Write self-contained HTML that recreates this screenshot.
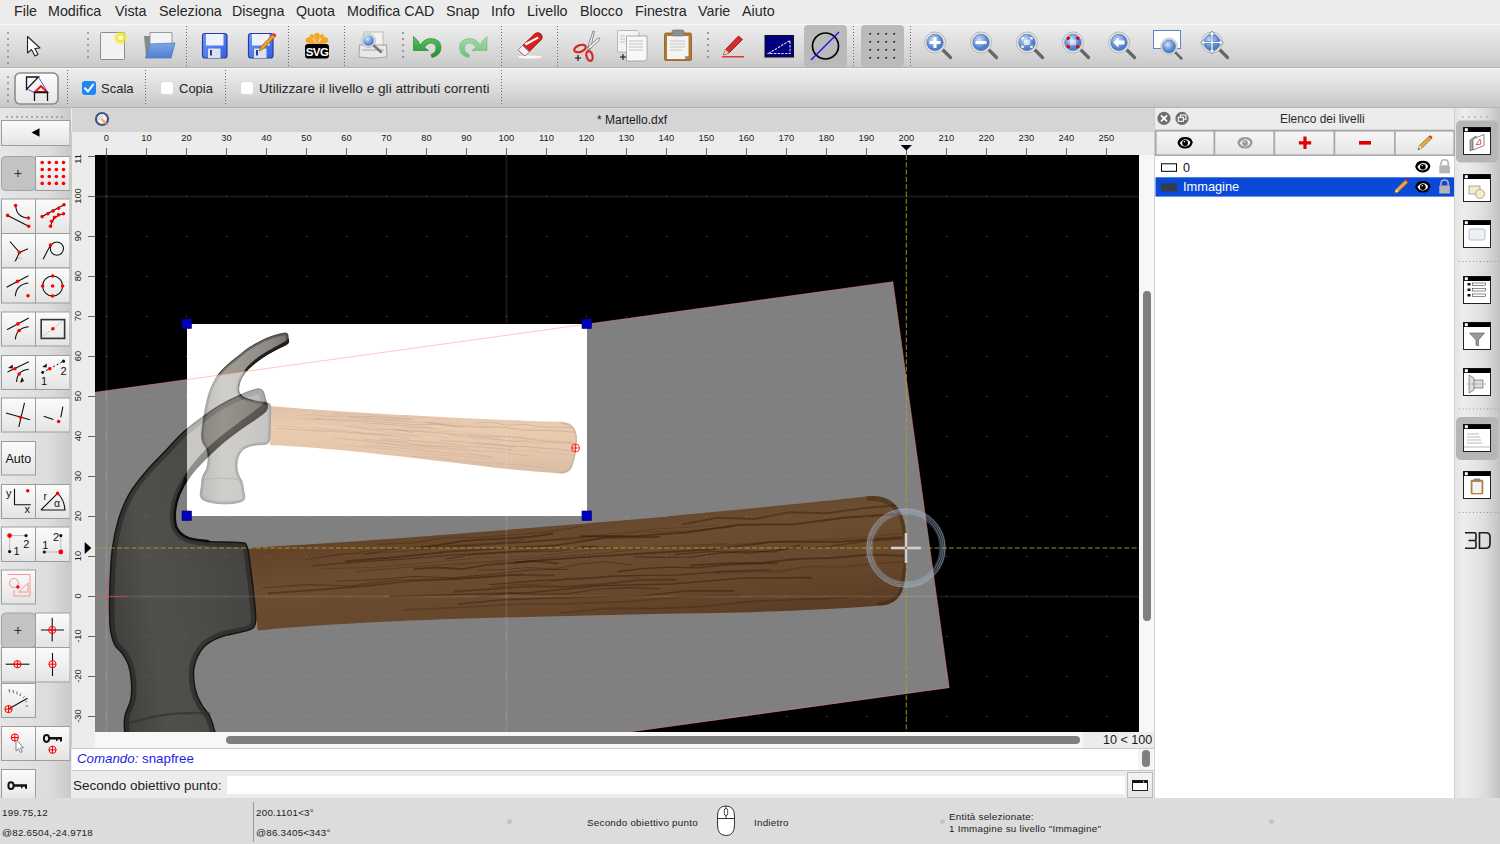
<!DOCTYPE html>
<html><head><meta charset="utf-8">
<style>
*{margin:0;padding:0;box-sizing:border-box}
html,body{width:1500px;height:844px;overflow:hidden;background:#ececec;font-family:"Liberation Sans",sans-serif;color:#222}
.a{position:absolute}
.t{position:absolute;white-space:nowrap;line-height:1}
#menu{left:0;top:0;width:1500px;height:24px;background:#ececec}
#menu .t{top:4px;font-size:14.3px;color:#262626}
#tb1{left:0;top:24px;width:1500px;height:44px;background:linear-gradient(#ededed,#e5e5e5 25%,#d6d6d6 70%,#c9c9c9);border-top:1px solid #f8f8f8;border-bottom:1px solid #b2b2b2}
#tb2{left:0;top:68px;width:1500px;height:40px;background:linear-gradient(#ededed,#e2e2e2 35%,#d2d2d2 75%,#c6c6c6);border-top:1px solid #f6f6f6;border-bottom:1px solid #b2b2b2}
.vsep{position:absolute;width:0;border-left:2px dotted #8a8a8a}
.hsep{position:absolute;height:0;border-top:2px dotted #8a8a8a}
#ltb{left:0;top:108px;width:71px;height:690px;background:linear-gradient(90deg,#e6e6e6,#dcdcdc 70%,#c9c9c9)}
.btn{position:absolute;width:35px;height:35px;border:1px solid #9c9c9c;background:linear-gradient(#fafafa,#ececec 60%,#e2e2e2)}
.btn.on{background:linear-gradient(#c9c9c9,#bdbdbd);border-color:#a5a5a5;border-radius:4px}
.btn svg{position:absolute;left:0;top:0}
#status{left:0;top:798px;width:1500px;height:46px;background:#dcdcdc}
#status .t{font-size:9.8px;letter-spacing:.25px;color:#222;margin-top:1px}
</style></head><body>

<!-- MENU -->
<div id="menu" class="a">
<span class="t" style="left:14px">File</span>
<span class="t" style="left:48px">Modifica</span>
<span class="t" style="left:115px">Vista</span>
<span class="t" style="left:159px">Seleziona</span>
<span class="t" style="left:232px">Disegna</span>
<span class="t" style="left:296px">Quota</span>
<span class="t" style="left:347px">Modifica CAD</span>
<span class="t" style="left:446px">Snap</span>
<span class="t" style="left:491px">Info</span>
<span class="t" style="left:527px">Livello</span>
<span class="t" style="left:580px">Blocco</span>
<span class="t" style="left:635px">Finestra</span>
<span class="t" style="left:698px">Varie</span>
<span class="t" style="left:742px">Aiuto</span>
</div>

<!-- TOOLBAR 1 -->
<div id="tb1" class="a"></div>
<svg class="a" style="left:0;top:24px" width="1500" height="44" viewBox="0 24 1500 44">
<defs>
<linearGradient id="gBlue" x1="0" y1="0" x2="0" y2="1"><stop offset="0" stop-color="#7aa7e8"/><stop offset="1" stop-color="#4d7fcc"/></linearGradient>
<linearGradient id="gFlop" x1="0" y1="0" x2="1" y2="1"><stop offset="0" stop-color="#6f9cf5"/><stop offset="1" stop-color="#2f5fe0"/></linearGradient>
<radialGradient id="gGlow"><stop offset="0" stop-color="#fffbb0"/><stop offset=".45" stop-color="#f0e830"/><stop offset="1" stop-color="#f0e830" stop-opacity="0"/></radialGradient>
<radialGradient id="gMag" cx=".4" cy=".35"><stop offset="0" stop-color="#d6e6fb"/><stop offset=".6" stop-color="#7fa8e0"/><stop offset="1" stop-color="#4f7fc8"/></radialGradient>
<linearGradient id="gGreen" x1="0" y1="0" x2="0" y2="1"><stop offset="0" stop-color="#5cc65c"/><stop offset="1" stop-color="#1f8f2f"/></linearGradient>
<linearGradient id="gGreenL" x1="0" y1="0" x2="0" y2="1"><stop offset="0" stop-color="#a8dca8"/><stop offset="1" stop-color="#6cbf7c"/></linearGradient>
</defs>
<g fill="#8a8a8a">
<circle cx="8" cy="33" r="1"/><circle cx="8" cy="39" r="1"/><circle cx="8" cy="45" r="1"/><circle cx="8" cy="51" r="1"/><circle cx="8" cy="57" r="1"/><circle cx="8" cy="63" r="1"/>
<circle cx="88" cy="33" r="1"/><circle cx="88" cy="39" r="1"/><circle cx="88" cy="45" r="1"/><circle cx="88" cy="51" r="1"/><circle cx="88" cy="57" r="1"/>
<circle cx="403" cy="33" r="1.1"/><circle cx="403" cy="39" r="1.1"/><circle cx="403" cy="45" r="1.1"/><circle cx="403" cy="51" r="1.1"/><circle cx="403" cy="57" r="1.1"/>
<circle cx="708" cy="33" r="1.1"/><circle cx="708" cy="39" r="1.1"/><circle cx="708" cy="45" r="1.1"/><circle cx="708" cy="51" r="1.1"/><circle cx="708" cy="57" r="1.1"/>
</g>
<g stroke="#6a6a6a" stroke-width="1" stroke-dasharray="1 2">
<line x1="186.5" y1="26" x2="186.5" y2="67"/><line x1="288.5" y1="26" x2="288.5" y2="67"/><line x1="344.5" y1="26" x2="344.5" y2="67"/>
<line x1="501.5" y1="26" x2="501.5" y2="67"/><line x1="557.5" y1="26" x2="557.5" y2="67"/><line x1="853.5" y1="26" x2="853.5" y2="67"/><line x1="910.5" y1="26" x2="910.5" y2="67"/>
</g>
<!-- arrow -->
<path d="M27.5 36.5 L27.5 53 L31.5 49.5 L35 56 L38 54.5 L34.8 48.5 L40 48 Z" fill="#fff" stroke="#222" stroke-width="1.1" stroke-linejoin="round"/>
<!-- new -->
<rect x="100.5" y="32.5" width="24" height="27" rx="1" fill="#f2f2f2" stroke="#8c8c8c"/>
<circle cx="120.7" cy="37.7" r="7.5" fill="url(#gGlow)"/><circle cx="120.7" cy="37.7" r="2.2" fill="#fffde0"/>
<!-- open -->
<path d="M144 36 L151 36 L151 57 L146 57 Z" fill="#8a8a8a"/>
<path d="M150 32.5 L172 32.5 L172 48 L150 48 Z" fill="#f4f4f4" stroke="#9a9a9a"/>
<path d="M150 44 L175 43 L171 58 L145.5 58 Z" fill="url(#gBlue)" stroke="#5579b5" stroke-width=".8"/>
<!-- save -->
<g id="flop"><rect x="202.5" y="33.5" width="24.5" height="24.5" rx="2.5" fill="url(#gFlop)" stroke="#2a3aa8" stroke-width="1.2"/>
<rect x="206" y="34" width="17.5" height="11.5" fill="#eef2fb"/>
<rect x="208" y="48.5" width="12.5" height="9.5" fill="#dde2ea"/><rect x="210" y="50" width="2" height="5.5" fill="#2238b8"/></g>
<use href="#flop" x="46"/>
<path d="M259 51 L261 46.5 L273.5 33.5 L276 35.5 L263.5 48.8 Z" fill="#f0a020" stroke="#b05010" stroke-width=".7"/>
<path d="M272 34.8 L273.8 33 L276.5 35.2 L274.8 37 Z" fill="#e03030"/>
<!-- svg -->
<g fill="#f5a623">
<path d="M317 45 L314 38 Q317 33 320 38 Z"/><path d="M317 45 L307 43 Q306 38 311 37 Z"/><path d="M317 45 L327 43 Q328 38 323 37 Z"/>
<circle cx="308.5" cy="40" r="2.8"/><circle cx="325.5" cy="40" r="2.8"/><circle cx="317" cy="35.5" r="2.8"/><circle cx="312" cy="36.5" r="2.3"/><circle cx="322" cy="36.5" r="2.3"/>
</g>
<rect x="305" y="44" width="24" height="14.5" rx="3" fill="#000"/>
<text x="317" y="56.3" font-family="Liberation Sans" font-weight="bold" font-size="11.5" fill="#fff" text-anchor="middle" letter-spacing="-.6">SVG</text>
<!-- print preview -->
<rect x="364" y="32" width="19" height="14" fill="#f2f2f2" stroke="#b0b0b0" stroke-width=".8"/>
<path d="M359.5 45 L386.5 45 L387 57 Q373 59.5 359 57 Z" fill="#e8e8e8" stroke="#9b9b9b" stroke-width=".9"/>
<rect x="362" y="49" width="22" height="2" fill="#c8c8c8"/>
<line x1="372" y1="44" x2="381" y2="52" stroke="#777" stroke-width="2.4" stroke-linecap="round"/>
<circle cx="368.5" cy="40.5" r="6" fill="url(#gMag)" stroke="#e8e8e8" stroke-width="1.4"/>
<circle cx="368.5" cy="40.5" r="6.9" fill="none" stroke="#9a9a9a" stroke-width=".6"/>
<!-- undo -->
<path d="M420 45.5 Q424 38.5 431 38.5 Q440.5 39 441 47 Q441 55.5 432 57.5 L431 54.5 Q436.5 52.5 436 47 Q435.5 43 431 43 Q427 43 424.5 47.5 L428.5 50.5 L413.5 50.5 L413.5 36.5 L418.5 41.5 Z" fill="url(#gGreen)" stroke="#1d7a2a" stroke-width=".6"/>
<!-- redo -->
<path d="M480.5 45.5 Q476.5 38.5 469.5 38.5 Q460 39 459.5 47 Q459.5 55.5 468.5 57.5 L469.5 54.5 Q464 52.5 464.5 47 Q465 43 469.5 43 Q473.5 43 476 47.5 L472 50.5 L487 50.5 L487 36.5 L482 41.5 Z" fill="url(#gGreenL)" stroke="#6cb87a" stroke-width=".6"/>
<!-- eraser -->
<ellipse cx="530" cy="57" rx="12" ry="1.6" fill="#fff" opacity=".85"/>
<path d="M518 50 L535 33.5 Q538 31.5 541 34 Q543.5 37 541.5 39.5 L525 56 Z" fill="#d42020" stroke="#8a1010" stroke-width=".7"/>
<path d="M524.5 43.5 L537.5 36.8 L538.8 38.3 L526 45.5 Z" fill="#fff"/>
<path d="M518 50 L522.5 45.5 L529.5 52 L525 56 Z" fill="#f4f4f4" stroke="#777" stroke-width=".6"/>
<!-- scissors -->
<path d="M587 49 L593 31 L594.5 31.5 L590 50 Z" fill="#eee" stroke="#777" stroke-width=".8"/>
<path d="M588 47 L599 37.5 L600 39.5 L590 49 Z" fill="#eee" stroke="#777" stroke-width=".8"/>
<ellipse cx="580" cy="48.5" rx="6" ry="3.3" fill="none" stroke="#d42828" stroke-width="2.2" transform="rotate(-20 580 48.5)"/>
<ellipse cx="589.5" cy="56" rx="3" ry="5" fill="none" stroke="#d42828" stroke-width="2.2" transform="rotate(-15 589.5 56)"/>
<path d="M575 58 H581 M578 55 V61" stroke="#111" stroke-width="1.1"/>
<!-- copy -->
<path d="M617.5 30.5 H637 L639 32.5 V52 H617.5 Z" fill="#f4f4f4" stroke="#aaa" stroke-width=".8"/>
<path d="M626.5 36 H647 V59 L645 61 H626.5 Z" fill="#f8f8f8" stroke="#999" stroke-width=".8"/>
<g stroke="#bbb" stroke-width=".9"><line x1="629" y1="41" x2="643" y2="41"/><line x1="629" y1="44" x2="643" y2="44"/><line x1="629" y1="47" x2="643" y2="47"/><line x1="629" y1="50" x2="643" y2="50"/><line x1="620" y1="36" x2="625" y2="36"/><line x1="620" y1="39" x2="625" y2="39"/><line x1="620" y1="42" x2="625" y2="42"/></g>
<path d="M620 57 H626 M623 54 V60" stroke="#111" stroke-width="1.1"/>
<!-- paste -->
<rect x="664.5" y="33" width="27" height="27.5" rx="1.5" fill="#b07a30" stroke="#8a5a20" stroke-width=".8"/>
<path d="M667 36 H688.5 V56 L685 59 H667 Z" fill="#f3f3f3"/>
<path d="M685 59 L688.5 56 H685 Z" fill="#999"/>
<rect x="672" y="30" width="12" height="6" rx="1.5" fill="#8f8f8f" stroke="#6b6b6b" stroke-width=".6"/>
<g stroke="#c4c4c4" stroke-width=".9"><line x1="670" y1="41" x2="685" y2="41"/><line x1="670" y1="44" x2="685" y2="44"/><line x1="670" y1="47" x2="685" y2="47"/><line x1="670" y1="50" x2="682" y2="50"/></g>
<!-- red pencil -->
<path d="M723.5 55 L725.5 49.5 L738.5 36 L742.5 39.5 L729 53 Z" fill="#d82a2a" stroke="#801010" stroke-width=".8"/>
<path d="M723.5 55 L725.5 49.5 L729 53 Z" fill="#f0d0a0"/>
<line x1="722" y1="56.8" x2="744" y2="56.8" stroke="#e01010" stroke-width="1.2"/>
<!-- blue rect -->
<rect x="765" y="35.5" width="28.5" height="21.5" fill="#000080" stroke="#111" stroke-width="1"/>
<path d="M768.5 53.5 L790 40.5 V53.5 Z" fill="none" stroke="#dde" stroke-width="1.1" stroke-dasharray="2.5 1.2"/>
<!-- selected circle -->
<rect x="804" y="25" width="43" height="42" rx="4" fill="#bababa"/>
<circle cx="825.5" cy="46" r="13" fill="none" stroke="#000" stroke-width="1.7"/>
<line x1="811" y1="60" x2="839" y2="32" stroke="#1010f0" stroke-width="1.2"/>
<!-- selected grid -->
<rect x="861" y="25" width="43" height="42" rx="4" fill="#bababa"/>
<g fill="#111">
<rect x="869.5" y="33" width="1.6" height="1.6"/><rect x="877.5" y="33" width="1.6" height="1.6"/><rect x="885.5" y="33" width="1.6" height="1.6"/><rect x="893.5" y="33" width="1.6" height="1.6"/>
<rect x="869.5" y="41" width="1.6" height="1.6"/><rect x="877.5" y="41" width="1.6" height="1.6"/><rect x="885.5" y="41" width="1.6" height="1.6"/><rect x="893.5" y="41" width="1.6" height="1.6"/>
<rect x="869.5" y="49" width="1.6" height="1.6"/><rect x="877.5" y="49" width="1.6" height="1.6"/><rect x="885.5" y="49" width="1.6" height="1.6"/><rect x="893.5" y="49" width="1.6" height="1.6"/>
<rect x="869.5" y="57" width="1.6" height="1.6"/><rect x="877.5" y="57" width="1.6" height="1.6"/><rect x="885.5" y="57" width="1.6" height="1.6"/><rect x="893.5" y="57" width="1.6" height="1.6"/>
</g>
<!-- zoom icons -->
<g id="zm"><line x1="941" y1="48" x2="950.5" y2="57.5" stroke="#666" stroke-width="3.2" stroke-linecap="round"/>
<circle cx="935" cy="42.5" r="10.5" fill="#e8e8e4" stroke="#aaa" stroke-width=".8"/>
<circle cx="935" cy="42.5" r="8.3" fill="url(#gMag)" stroke="#4c74b8" stroke-width=".6"/></g>
<path d="M935 37 V48 M929.5 42.5 H940.5" stroke="#fff" stroke-width="3"/>
<use href="#zm" x="46"/>
<path d="M975.5 42.5 H986.5" stroke="#fff" stroke-width="3"/>
<use href="#zm" x="92"/>
<path d="M1022 39.5 V38 H1024 M1030 38 H1032 V39.5 M1032 45.5 V47 H1030 M1024 47 H1022 V45.5" stroke="#fff" stroke-width="1.5" fill="none"/><rect x="1024" y="40" width="6" height="5" fill="#fff" opacity=".6"/>
<use href="#zm" x="138"/>
<path d="M1068 40 V38 H1070 M1076 38 H1078 V40 M1078 45 V47 H1076 M1070 47 H1068 V45" stroke="#e00" stroke-width="2.2" fill="none"/><rect x="1070" y="40" width="6" height="5" fill="#fff" opacity=".5"/>
<use href="#zm" x="184"/>
<path d="M1113.5 42.5 L1118.5 37.5 V40.5 H1124.5 V44.5 H1118.5 V47.5 Z" fill="#fff"/>
<rect x="1153.5" y="30.5" width="27" height="18" fill="#fff" stroke="#5a86c8" stroke-width="1"/>
<g transform="translate(1169 46.5) scale(.8) translate(-935 -42.5)"><use href="#zm"/></g>
<use href="#zm" x="277"/>
<path d="M1212 31 L1215 35 H1213 V41.5 H1219.5 V39.5 L1223.5 42.5 L1219.5 45.5 V43.5 H1213 V50 H1215 L1212 54 L1209 50 H1211 V43.5 H1204.5 V45.5 L1200.5 42.5 L1204.5 39.5 V41.5 H1211 V35 H1209 Z" fill="#fff" stroke="#4c74b8" stroke-width=".7"/>
</svg>

<!-- TOOLBAR 2 -->
<div id="tb2" class="a"></div>
<svg class="a" style="left:0;top:68px" width="520" height="40" viewBox="0 68 520 40">
<g fill="#8a8a8a"><circle cx="8" cy="77" r="1"/><circle cx="8" cy="83" r="1"/><circle cx="8" cy="89" r="1"/><circle cx="8" cy="95" r="1"/><circle cx="8" cy="101" r="1"/></g>
<g stroke="#6a6a6a" stroke-width="1" stroke-dasharray="1 2">
<line x1="67.5" y1="70" x2="67.5" y2="106"/><line x1="145.5" y1="70" x2="145.5" y2="106"/><line x1="225.5" y1="70" x2="225.5" y2="106"/><line x1="501.5" y1="70" x2="501.5" y2="106"/>
</g>
<rect x="15" y="73" width="43" height="31" rx="5" fill="url(#gBtn)" stroke="#8a8a8a" stroke-width="1.6"/>
<defs><linearGradient id="gBtn" x1="0" y1="0" x2="0" y2="1"><stop offset="0" stop-color="#fdfdfd"/><stop offset="1" stop-color="#e6e6e6"/></linearGradient></defs>
<path d="M26.5 89.5 V77 H38.5 Z" fill="none" stroke="#111" stroke-width="1.3"/>
<path d="M26.5 89 L34.5 92.5 M38.5 77 L47.5 92" stroke="#3030f0" stroke-width=".8"/>
<path d="M35 92 L41 86 L47 92 Z" fill="none" stroke="#e01010" stroke-width="1.8"/>
<path d="M34.5 101 V92.5 H47.5 V101" fill="none" stroke="#111" stroke-width="1.3"/>
<rect x="82" y="81" width="14" height="14" rx="3" fill="#1e85fa"/>
<path d="M85 88.3 L88 91.5 L93.2 84.5" fill="none" stroke="#fff" stroke-width="2" stroke-linecap="round" stroke-linejoin="round"/>
<rect x="160.5" y="81.5" width="13" height="13" rx="3" fill="#fff" stroke="#d4d4d4" stroke-width=".8"/>
<rect x="240.5" y="81.5" width="13" height="13" rx="3" fill="#fff" stroke="#d4d4d4" stroke-width=".8"/>
<text font-family="Liberation Sans" font-size="13" fill="#262626"><tspan x="101" y="92.7">Scala</tspan><tspan x="179" y="92.7">Copia</tspan><tspan x="259" y="92.7" font-size="13.65">Utilizzare il livello e gli attributi correnti</tspan></text>
</svg>


<!-- LEFT TOOLBAR -->
<div id="ltb" class="a"></div>
<svg class="a" style="left:0;top:108px" width="72" height="690" viewBox="0 108 72 690">
<defs><linearGradient id="lbG" x1="0" y1="0" x2="0" y2="1"><stop offset="0" stop-color="#fbfbfb"/><stop offset=".55" stop-color="#efefef"/><stop offset="1" stop-color="#e3e3e3"/></linearGradient></defs>
<rect x="1.5" y="120.5" width="68.5" height="25" fill="url(#lbG)" stroke="#9d9d9d"/><rect x="1.5" y="156.5" width="34" height="34.0" rx="4" fill="#c3c3c3" stroke="#a3a3a3"/><rect x="35.5" y="156.5" width="34.5" height="34.0" fill="url(#lbG)" stroke="#9d9d9d"/><rect x="1.5" y="199" width="34" height="34.5" fill="url(#lbG)" stroke="#9d9d9d"/><rect x="35.5" y="199" width="34.5" height="34.5" fill="url(#lbG)" stroke="#9d9d9d"/><rect x="1.5" y="233.5" width="34" height="34.5" fill="url(#lbG)" stroke="#9d9d9d"/><rect x="35.5" y="233.5" width="34.5" height="34.5" fill="url(#lbG)" stroke="#9d9d9d"/><rect x="1.5" y="268" width="34" height="35" fill="url(#lbG)" stroke="#9d9d9d"/><rect x="35.5" y="268" width="34.5" height="35" fill="url(#lbG)" stroke="#9d9d9d"/><rect x="1.5" y="312" width="34" height="34" fill="url(#lbG)" stroke="#9d9d9d"/><rect x="35.5" y="312" width="34.5" height="34" fill="url(#lbG)" stroke="#9d9d9d"/><rect x="1.5" y="355.5" width="34" height="34.0" fill="url(#lbG)" stroke="#9d9d9d"/><rect x="35.5" y="355.5" width="34.5" height="34.0" fill="url(#lbG)" stroke="#9d9d9d"/><rect x="1.5" y="398" width="34" height="34" fill="url(#lbG)" stroke="#9d9d9d"/><rect x="35.5" y="398" width="34.5" height="34" fill="url(#lbG)" stroke="#9d9d9d"/><rect x="1.5" y="441.5" width="34" height="33.5" fill="url(#lbG)" stroke="#9d9d9d"/><rect x="1.5" y="484.5" width="34" height="34.0" fill="url(#lbG)" stroke="#9d9d9d"/><rect x="35.5" y="484.5" width="34.5" height="34.0" fill="url(#lbG)" stroke="#9d9d9d"/><rect x="1.5" y="527" width="34" height="34.5" fill="url(#lbG)" stroke="#9d9d9d"/><rect x="35.5" y="527" width="34.5" height="34.5" fill="url(#lbG)" stroke="#9d9d9d"/><rect x="1.5" y="570" width="34" height="34" fill="url(#lbG)" stroke="#9d9d9d"/><rect x="1.5" y="613" width="34" height="34.5" rx="4" fill="#c3c3c3" stroke="#a3a3a3"/><rect x="35.5" y="613" width="34.5" height="34.5" fill="url(#lbG)" stroke="#9d9d9d"/><rect x="1.5" y="647.5" width="34" height="34.5" fill="url(#lbG)" stroke="#9d9d9d"/><rect x="35.5" y="647.5" width="34.5" height="34.5" fill="url(#lbG)" stroke="#9d9d9d"/><rect x="1.5" y="683.5" width="34" height="34.0" fill="url(#lbG)" stroke="#9d9d9d"/><rect x="1.5" y="726.5" width="34" height="34.0" fill="url(#lbG)" stroke="#9d9d9d"/><rect x="35.5" y="726.5" width="34.5" height="34.0" fill="url(#lbG)" stroke="#9d9d9d"/><rect x="1.5" y="769.5" width="34" height="34.5" fill="url(#lbG)" stroke="#9d9d9d"/>

<g fill="#8f8f8f"><circle cx="7" cy="117" r=".9"/><circle cx="12" cy="117" r=".9"/><circle cx="17" cy="117" r=".9"/><circle cx="22" cy="117" r=".9"/><circle cx="27" cy="117" r=".9"/><circle cx="32" cy="117" r=".9"/><circle cx="37" cy="117" r=".9"/><circle cx="42" cy="117" r=".9"/><circle cx="47" cy="117" r=".9"/><circle cx="52" cy="117" r=".9"/><circle cx="57" cy="117" r=".9"/><circle cx="62" cy="117" r=".9"/></g>
<path d="M31.5 132.5 L39.5 128.3 V136.7 Z" fill="#000"/>
<path d="M14.5 630.5 H21.5 M18 627 V634" stroke="#333" stroke-width="1.1"/>
<path d="M14.5 173.5 H21.5 M18 170 V177" stroke="#333" stroke-width="1.1"/>
<g fill="#f00">
<circle cx="42.2" cy="162.5" r="1.8"/><circle cx="49.3" cy="162.5" r="1.8"/><circle cx="56.4" cy="162.5" r="1.8"/><circle cx="63.5" cy="162.5" r="1.8"/>
<circle cx="42.2" cy="169.5" r="1.8"/><circle cx="49.3" cy="169.5" r="1.8"/><circle cx="56.4" cy="169.5" r="1.8"/><circle cx="63.5" cy="169.5" r="1.8"/>
<circle cx="42.2" cy="176.5" r="1.8"/><circle cx="49.3" cy="176.5" r="1.8"/><circle cx="56.4" cy="176.5" r="1.8"/><circle cx="63.5" cy="176.5" r="1.8"/>
<circle cx="42.2" cy="183.4" r="1.8"/><circle cx="49.3" cy="183.4" r="1.8"/><circle cx="56.4" cy="183.4" r="1.8"/><circle cx="63.5" cy="183.4" r="1.8"/>
</g>
<g stroke="#111" stroke-width="1.1" fill="none">
<path d="M7.6 215.4 L28.7 226.3"/><path d="M15.6 205.5 Q16.5 217.5 28.4 218"/>
<path d="M42.2 216.6 L64 204.7"/><path d="M50.5 226.3 Q52 216 63.5 213.7"/>
<path d="M10 241.5 L19.4 252.4 L15.4 261 M19.4 252.4 L28 248.8"/>
<path d="M43.1 259.2 L50.5 245"/><circle cx="56.9" cy="248.6" r="6.6"/>
<path d="M6.6 287.2 L28.4 275.8"/><path d="M15.4 296.2 Q16 284.5 28.4 283"/>
<circle cx="52.6" cy="286" r="10"/>
<path d="M7 329.8 L28.8 318.1"/><path d="M15.4 339.4 Q16 328 28.8 326.7"/>
<rect x="41.2" y="319.6" width="23.4" height="18.8" stroke-width="1.6" stroke="#333"/>
<path d="M7.5 371.9 L28.8 361.8"/><path d="M16.6 382 Q17 370.5 28.8 369.3"/>
<path d="M6 413 L29.9 419.8 M24.5 402.8 L18.8 426.9"/>
<path d="M43.7 416.2 L53.3 419.4 M62.9 406.6 L60.8 417.3"/>
<path d="M14.5 488.7 V504.7 H30.9"/>
<path d="M40.9 510 L57.6 493.4 M40.9 510 H65 Q64 499 57.6 493.4"/>
<path d="M40.9 630 H64 M52.2 617.7 V641.5"/>
<path d="M5.7 664.2 H29.4"/><path d="M52.5 652.9 V676"/>
<path d="M8.5 709.1 L27.5 698.3"/>
</g>
<path d="M41.2 337.6 L64.4 320" stroke="#888" stroke-width=".7" stroke-dasharray="1.5 1.5"/>
<path d="M42.6 372.5 L63.5 361.2" stroke="#111" stroke-width="1" stroke-dasharray="2 2"/>
<path d="M9.6 551.6 V535.6 H26" stroke="#bbb" stroke-width="1" fill="none"/>
<path d="M44.3 552 H60.8 V535.6" stroke="#bbb" stroke-width="1" fill="none"/>
<g stroke="#666" stroke-width="1" fill="none"><path d="M9 689 L9.6 692.5 M13 690 L13.5 693 M17 691.5 L17 694.5 M20.5 693.5 L20 696 M24.5 696.5 L23 698 M27 701 L25.5 702 M28 706 L25.5 706"/></g>
<g fill="#111">
<circle cx="64" cy="204.7" r="0" />
<text x="16.5" y="220" font-size="0"></text>
<circle cx="9.6" cy="551.6" r="1.6"/><circle cx="26" cy="535.6" r="1.6"/><circle cx="44.3" cy="552" r="1.6"/><circle cx="60.8" cy="535.6" r="1.6"/>
<circle cx="42.6" cy="372.5" r="1.4"/><circle cx="63.5" cy="361.2" r="1.6"/>
<path d="M8 368 L13 364.5 L12.5 368.5 Z M42 367 L47 363.5 L46.5 367.5 Z M20 383 L22 377 L24 381 Z"/>
</g>
<g font-family="Liberation Sans" fill="#111">
<text x="41" y="384.5" font-size="11">1</text><text x="60.5" y="374.5" font-size="11">2</text>
<text x="5.5" y="462.5" font-size="12.5">Auto</text>
<text x="6" y="497" font-size="11">y</text><text x="24.5" y="513" font-size="11">x</text>
<text x="43.5" y="500" font-size="10.5">r</text><text x="54" y="506.5" font-size="10.5">α</text>
<text x="23.3" y="547.5" font-size="11">2</text><text x="13.5" y="555" font-size="11">1</text>
<text x="53" y="541" font-size="11">2</text><text x="42.3" y="548.5" font-size="11">1</text>
</g>
<g fill="#f00">
<circle cx="7.6" cy="215.4" r="1.8"/><circle cx="28.7" cy="226.3" r="1.8"/><circle cx="15.6" cy="205.5" r="1.8"/><circle cx="28.4" cy="218" r="1.8"/>
<circle cx="42.2" cy="216.6" r="1.8"/><circle cx="47.9" cy="213.7" r="1.8"/><circle cx="53.1" cy="210.9" r="1.8"/><circle cx="58.5" cy="208.3" r="1.8"/><circle cx="64" cy="204.7" r="1.8"/>
<circle cx="50.5" cy="226.3" r="1.8"/><circle cx="51.7" cy="221.3" r="1.8"/><circle cx="54.5" cy="217.3" r="1.8"/><circle cx="58.5" cy="214.9" r="1.8"/><circle cx="63.5" cy="213.7" r="1.8"/>
<circle cx="19.4" cy="252.4" r="1.8"/><circle cx="50.5" cy="245" r="1.8"/>
<circle cx="17.5" cy="281.3" r="1.8"/><circle cx="28" cy="295.7" r="1.8"/>
<circle cx="52.6" cy="286" r="1.8"/><circle cx="52.6" cy="276" r="1.8"/><circle cx="52.6" cy="296" r="1.8"/><circle cx="42.6" cy="286" r="1.8"/><circle cx="62.6" cy="286" r="1.8"/>
<circle cx="17.9" cy="323.9" r="1.8"/><circle cx="19.2" cy="330.5" r="1.8"/><circle cx="52.9" cy="328.8" r="1.8"/>
<circle cx="14.9" cy="368.7" r="1.8"/><circle cx="19.2" cy="374" r="1.8"/><circle cx="49.7" cy="368.7" r="1.8"/>
<circle cx="20.7" cy="417.3" r="1.8"/><circle cx="58.6" cy="421.5" r="1.8"/>
<circle cx="27.7" cy="490.8" r="1.8"/><circle cx="57.6" cy="493.4" r="1.8"/>
<circle cx="9.6" cy="535.6" r="2.4"/><circle cx="60.8" cy="552" r="2.4"/>
</g>
<path d="M14.5 262 Q17 256.5 21.5 258.5" stroke="#444" stroke-width=".6" stroke-dasharray="1 1" fill="none"/>
<g stroke="#f08a8a" stroke-width=".9" fill="none">
<path d="M7.5 574.5 H30 V596 H14 V590"/><circle cx="14" cy="583" r="4.5"/><path d="M18.5 592 L28 583 V592 Z"/>
</g>
<circle cx="17.9" cy="587" r="1.7" fill="#f00"/>
<g stroke="#f00" stroke-width="1" fill="none">
<circle cx="52.2" cy="630" r="3.6"/><path d="M48.6 630 H55.8 M52.2 626.4 V633.6"/>
<circle cx="17.4" cy="664.2" r="3.6"/><path d="M13.8 664.2 H21 M17.4 660.6 V667.8"/>
<circle cx="52.5" cy="664.2" r="3.6"/><path d="M48.9 664.2 H56.1 M52.5 660.6 V667.8"/>
<circle cx="8.5" cy="709.1" r="3.6"/><path d="M4.9 709.1 H12.1 M8.5 705.5 V712.7"/>
<circle cx="14.8" cy="737.5" r="3.6"/><path d="M11.2 737.5 H18.4 M14.8 733.9 V741.1"/>
<circle cx="52.5" cy="749.8" r="3.6"/><path d="M48.9 749.8 H56.1 M52.5 746.2 V753.4"/>
</g>
<path d="M16 739.5 V751 L18.5 748.8 L20.5 752.5 L22.3 751.5 L20.3 748 L23.5 747.8 Z" fill="#fff" stroke="#666" stroke-width=".8"/>
<g fill="none" stroke="#111" stroke-width="2"><ellipse cx="46.5" cy="738.5" rx="2.6" ry="3.4"/><ellipse cx="11" cy="785.7" rx="2.6" ry="3.4"/></g>
<path d="M49 737 H62 V741.5 H60 V739.5 H57.5 V741 H56 V739.5 H49 Z" fill="#111"/>
<path d="M13.5 784.2 H27 V788.7 H25 V786.7 H22.5 V788.2 H21 V786.7 H13.5 Z" fill="#111"/>

</svg>

<!-- DRAWING AREA -->
<div class="a" style="left:72px;top:108px;width:1082px;height:24px;background:#d5d5d5"></div>
<div class="t" style="left:597px;top:114px;font-size:12px;color:#1a1a1a">* Martello.dxf</div>
<svg class="a" style="left:94px;top:111px" width="17" height="17"><circle cx="8" cy="8" r="6" fill="#f4f4f4" stroke="#3a5590" stroke-width="2.2"/><path d="M5 5 L9.5 9.5 M8 4 V6 M4 8 H6" stroke="#e08080" stroke-width=".7"/><path d="M7.5 8 L12 12.5" stroke="#f0b030" stroke-width="2"/><circle cx="12.5" cy="13" r="1.2" fill="#e07070"/></svg>
<div class="a" style="left:72px;top:132px;width:1082px;height:616px;background:#ececec"></div>
<svg class="a" style="left:72px;top:132px" width="1082" height="600" viewBox="72 132 1082 600">
<g font-family="Liberation Sans" font-size="9.4" fill="#1a1a1a">
<line x1="106.5" y1="148" x2="106.5" y2="155" stroke="#666" stroke-width="1"/><text x="106.4" y="141" text-anchor="middle">0</text><line x1="146.5" y1="148" x2="146.5" y2="155" stroke="#666" stroke-width="1"/><text x="146.4" y="141" text-anchor="middle">10</text><line x1="186.5" y1="148" x2="186.5" y2="155" stroke="#666" stroke-width="1"/><text x="186.4" y="141" text-anchor="middle">20</text><line x1="226.5" y1="148" x2="226.5" y2="155" stroke="#666" stroke-width="1"/><text x="226.4" y="141" text-anchor="middle">30</text><line x1="266.5" y1="148" x2="266.5" y2="155" stroke="#666" stroke-width="1"/><text x="266.4" y="141" text-anchor="middle">40</text><line x1="306.5" y1="148" x2="306.5" y2="155" stroke="#666" stroke-width="1"/><text x="306.4" y="141" text-anchor="middle">50</text><line x1="346.5" y1="148" x2="346.5" y2="155" stroke="#666" stroke-width="1"/><text x="346.4" y="141" text-anchor="middle">60</text><line x1="386.5" y1="148" x2="386.5" y2="155" stroke="#666" stroke-width="1"/><text x="386.4" y="141" text-anchor="middle">70</text><line x1="426.5" y1="148" x2="426.5" y2="155" stroke="#666" stroke-width="1"/><text x="426.4" y="141" text-anchor="middle">80</text><line x1="466.5" y1="148" x2="466.5" y2="155" stroke="#666" stroke-width="1"/><text x="466.4" y="141" text-anchor="middle">90</text><line x1="506.5" y1="148" x2="506.5" y2="155" stroke="#666" stroke-width="1"/><text x="506.4" y="141" text-anchor="middle">100</text><line x1="546.5" y1="148" x2="546.5" y2="155" stroke="#666" stroke-width="1"/><text x="546.4" y="141" text-anchor="middle">110</text><line x1="586.5" y1="148" x2="586.5" y2="155" stroke="#666" stroke-width="1"/><text x="586.4" y="141" text-anchor="middle">120</text><line x1="626.5" y1="148" x2="626.5" y2="155" stroke="#666" stroke-width="1"/><text x="626.4" y="141" text-anchor="middle">130</text><line x1="666.5" y1="148" x2="666.5" y2="155" stroke="#666" stroke-width="1"/><text x="666.4" y="141" text-anchor="middle">140</text><line x1="706.5" y1="148" x2="706.5" y2="155" stroke="#666" stroke-width="1"/><text x="706.4" y="141" text-anchor="middle">150</text><line x1="746.5" y1="148" x2="746.5" y2="155" stroke="#666" stroke-width="1"/><text x="746.4" y="141" text-anchor="middle">160</text><line x1="786.5" y1="148" x2="786.5" y2="155" stroke="#666" stroke-width="1"/><text x="786.4" y="141" text-anchor="middle">170</text><line x1="826.5" y1="148" x2="826.5" y2="155" stroke="#666" stroke-width="1"/><text x="826.4" y="141" text-anchor="middle">180</text><line x1="866.5" y1="148" x2="866.5" y2="155" stroke="#666" stroke-width="1"/><text x="866.4" y="141" text-anchor="middle">190</text><line x1="906.5" y1="148" x2="906.5" y2="155" stroke="#666" stroke-width="1"/><text x="906.4" y="141" text-anchor="middle">200</text><line x1="946.5" y1="148" x2="946.5" y2="155" stroke="#666" stroke-width="1"/><text x="946.4" y="141" text-anchor="middle">210</text><line x1="986.5" y1="148" x2="986.5" y2="155" stroke="#666" stroke-width="1"/><text x="986.4" y="141" text-anchor="middle">220</text><line x1="1026.5" y1="148" x2="1026.5" y2="155" stroke="#666" stroke-width="1"/><text x="1026.4" y="141" text-anchor="middle">230</text><line x1="1066.5" y1="148" x2="1066.5" y2="155" stroke="#666" stroke-width="1"/><text x="1066.4" y="141" text-anchor="middle">240</text><line x1="1106.5" y1="148" x2="1106.5" y2="155" stroke="#666" stroke-width="1"/><text x="1106.4" y="141" text-anchor="middle">250</text>
</g>
<g font-family="Liberation Sans" font-size="9.4" fill="#1a1a1a">
<line x1="88" y1="156.5" x2="95" y2="156.5" stroke="#666" stroke-width="1"/><text transform="translate(81.3 159) rotate(-90)" text-anchor="middle">11</text><line x1="88" y1="196.5" x2="95" y2="196.5" stroke="#666" stroke-width="1"/><text transform="translate(81.3 196.0) rotate(-90)" text-anchor="middle">100</text><line x1="88" y1="236.5" x2="95" y2="236.5" stroke="#666" stroke-width="1"/><text transform="translate(81.3 236.0) rotate(-90)" text-anchor="middle">90</text><line x1="88" y1="276.5" x2="95" y2="276.5" stroke="#666" stroke-width="1"/><text transform="translate(81.3 276.0) rotate(-90)" text-anchor="middle">80</text><line x1="88" y1="316.5" x2="95" y2="316.5" stroke="#666" stroke-width="1"/><text transform="translate(81.3 316.0) rotate(-90)" text-anchor="middle">70</text><line x1="88" y1="356.5" x2="95" y2="356.5" stroke="#666" stroke-width="1"/><text transform="translate(81.3 356.0) rotate(-90)" text-anchor="middle">60</text><line x1="88" y1="396.5" x2="95" y2="396.5" stroke="#666" stroke-width="1"/><text transform="translate(81.3 396.0) rotate(-90)" text-anchor="middle">50</text><line x1="88" y1="436.5" x2="95" y2="436.5" stroke="#666" stroke-width="1"/><text transform="translate(81.3 436.0) rotate(-90)" text-anchor="middle">40</text><line x1="88" y1="476.5" x2="95" y2="476.5" stroke="#666" stroke-width="1"/><text transform="translate(81.3 476.0) rotate(-90)" text-anchor="middle">30</text><line x1="88" y1="516.5" x2="95" y2="516.5" stroke="#666" stroke-width="1"/><text transform="translate(81.3 516.0) rotate(-90)" text-anchor="middle">20</text><line x1="88" y1="556.5" x2="95" y2="556.5" stroke="#666" stroke-width="1"/><text transform="translate(81.3 556.0) rotate(-90)" text-anchor="middle">10</text><line x1="88" y1="596.5" x2="95" y2="596.5" stroke="#666" stroke-width="1"/><text transform="translate(81.3 596.0) rotate(-90)" text-anchor="middle">0</text><line x1="88" y1="636.5" x2="95" y2="636.5" stroke="#666" stroke-width="1"/><text transform="translate(81.3 636.0) rotate(-90)" text-anchor="middle">-10</text><line x1="88" y1="676.5" x2="95" y2="676.5" stroke="#666" stroke-width="1"/><text transform="translate(81.3 676.0) rotate(-90)" text-anchor="middle">-20</text><line x1="88" y1="716.5" x2="95" y2="716.5" stroke="#666" stroke-width="1"/><text transform="translate(81.3 716.0) rotate(-90)" text-anchor="middle">-30</text>
</g>
<path d="M900.7 145 H912 L906.3 150.5 Z" fill="#000"/>
<path d="M84.7 542 V554 L91.3 548 Z" fill="#000"/>
</svg>
<div class="a" style="left:70px;top:132px;width:2px;height:616px;background:#c9c9c9"></div>
<svg class="a" style="left:95px;top:155px" width="1044" height="577" viewBox="95 155 1044 577">
<defs>
<linearGradient id="wood" x1="0" y1="0" x2="0" y2="1"><stop offset="0" stop-color="#c4834f"/><stop offset=".3" stop-color="#d69a62"/><stop offset=".7" stop-color="#cc8e58"/><stop offset="1" stop-color="#b47848"/></linearGradient>
<linearGradient id="metal" x1="0" y1="0" x2="1" y2="0"><stop offset="0" stop-color="#7e7b76"/><stop offset=".25" stop-color="#a29e97"/><stop offset=".5" stop-color="#9a968f"/><stop offset=".8" stop-color="#8c8882"/><stop offset="1" stop-color="#75726d"/></linearGradient>
<clipPath id="headclip"><path d="M99.3 9.1 C97.2 8.6 92.1 10.1 88.8 11.0 C85.5 11.9 82.6 13.0 79.4 14.3 C76.2 15.7 73.1 17.4 69.9 19.1 C66.7 20.8 63.6 22.5 60.4 24.7 C57.2 26.9 54.1 29.8 50.9 32.3 C47.7 34.8 44.5 37.0 41.4 39.9 C38.2 42.8 34.7 45.9 32.0 49.4 C29.3 52.9 27.2 56.7 25.3 60.8 C23.4 64.9 21.9 69.1 20.6 74.0 C19.3 78.9 18.2 85.0 17.3 90.0 C16.4 95.0 15.6 100.3 15.2 104.0 C14.8 107.7 14.5 109.5 14.6 112.0 C14.7 114.5 15.1 117.0 15.8 118.8 C16.5 120.6 17.8 121.3 18.6 123.0 C19.4 124.7 20.3 126.5 20.7 128.7 C21.1 130.9 21.2 133.7 21.0 136.4 C20.8 139.1 20.4 142.4 19.5 145.0 C18.6 147.6 16.6 149.5 15.8 152.0 C15.0 154.5 14.7 156.2 14.6 160.0 C14.5 163.8 11.4 171.7 15.0 175.0 C18.6 178.3 29.1 179.6 36.0 179.8 C42.9 180.1 52.9 179.0 56.3 176.5 C59.7 174.0 56.6 168.2 56.4 165.0 C56.2 161.8 55.6 159.5 55.0 157.5 C54.4 155.5 53.4 154.8 52.6 153.0 C51.9 151.2 50.9 149.1 50.5 147.0 C50.1 144.9 49.9 142.6 50.0 140.4 C50.1 138.2 50.3 136.1 50.9 134.1 C51.5 132.1 52.4 130.3 53.6 128.7 C54.8 127.0 56.0 125.4 58.1 124.2 C60.2 123.0 62.8 122.1 66.2 121.4 C69.6 120.7 75.8 120.9 78.5 120.2 C81.2 119.5 81.4 119.5 82.2 117.5 C83.0 115.5 83.0 112.6 83.2 108.0 C83.4 103.4 83.6 94.5 83.6 90.0 C83.6 85.5 83.8 82.8 83.2 81.0 C82.6 79.2 82.9 79.8 80.0 79.0 C77.1 78.2 69.9 77.4 66.0 76.5 C62.1 75.6 58.8 74.8 56.5 73.5 C54.2 72.2 52.8 70.6 52.0 68.5 C51.2 66.4 51.5 63.6 52.0 61.0 C52.5 58.4 53.4 55.8 55.0 53.0 C56.6 50.2 58.9 47.2 61.5 44.5 C64.1 41.8 67.4 39.3 70.5 37.0 C73.6 34.7 76.9 32.4 80.0 30.5 C83.1 28.6 85.6 27.3 89.0 25.5 C92.4 23.7 98.5 21.4 100.5 19.5 C102.5 17.6 101.4 15.7 101.2 14.0 C101.0 12.3 101.4 9.6 99.3 9.1Z"/></clipPath>
<clipPath id="hclip"><path d="M83 81.9 C140 87 200 90 278 94.3 C330 96.5 355 97.5 376 98 Q387.5 99 389.8 111.3 Q391 125 385.6 141.4 Q383 149.3 374.7 149.5 C340 147.5 300 143 278 140 C200 131 140 123.5 83 121 Z"/></clipPath>
<g id="hammer">
<rect x="0" y="0" width="400" height="192" fill="#fff"/>
<path d="M83 81.9 C140 87 200 90 278 94.3 C330 96.5 355 97.5 376 98 Q387.5 99 389.8 111.3 Q391 125 385.6 141.4 Q383 149.3 374.7 149.5 C340 147.5 300 143 278 140 C200 131 140 123.5 83 121 Z" fill="url(#wood)"/>
<g stroke="#5a2e0e" fill="none" stroke-linejoin="round" clip-path="url(#hclip)"><path d="M116.6 96.4 L141.8 99.2 L167.0 100.6 L192.1 101.6 L217.3 104.4 L242.5 105.0 L267.7 107.7" stroke-opacity="0.22" stroke-width="0.45"/><path d="M262.6 111.1 L275.5 113.1 L288.4 114.8 L301.3 114.8 L314.2 115.4 L327.0 117.7 L339.9 116.4" stroke-opacity="0.46" stroke-width="0.57"/><path d="M109.4 91.2 L126.6 90.8 L143.8 92.8 L161.0 94.0 L178.2 94.4 L195.4 95.9 L212.6 95.8" stroke-opacity="0.22" stroke-width="0.52"/><path d="M176.4 115.6 L193.7 116.7 L211.0 117.8 L228.4 120.5 L245.7 121.7 L263.0 122.1 L280.3 124.3" stroke-opacity="0.36" stroke-width="0.93"/><path d="M146.2 113.7 L179.1 117.3 L211.9 120.9 L244.8 122.3 L277.7 126.0 L310.5 127.8 L343.4 132.1" stroke-opacity="0.43" stroke-width="0.74"/><path d="M151.8 120.8 L178.0 123.2 L204.2 125.4 L230.4 128.7 L256.7 131.4 L282.9 132.7 L309.1 135.6" stroke-opacity="0.22" stroke-width="0.82"/><path d="M298.5 123.7 L313.4 125.2 L328.3 127.1 L343.3 126.8 L358.2 129.1 L373.1 129.6 L388.0 130.7" stroke-opacity="0.22" stroke-width="0.86"/><path d="M137.5 92.5 L156.6 91.8 L175.7 93.9 L194.9 95.3 L214.0 97.3 L233.1 98.3 L252.2 99.6" stroke-opacity="0.28" stroke-width="0.65"/><path d="M275.0 109.1 L293.8 110.5 L312.7 111.9 L331.5 113.3 L350.3 115.2 L369.2 116.8 L388.0 117.3" stroke-opacity="0.20" stroke-width="0.65"/><path d="M206.3 105.9 L236.6 107.7 L266.9 110.1 L297.2 112.4 L327.4 113.0 L357.7 117.2 L388.0 119.1" stroke-opacity="0.46" stroke-width="0.88"/><path d="M170.2 104.1 L182.6 103.6 L195.0 104.5 L207.4 105.8 L219.8 106.5 L232.3 107.9 L244.7 108.1" stroke-opacity="0.20" stroke-width="0.49"/><path d="M162.5 93.0 L173.1 93.0 L183.7 92.6 L194.3 93.4 L204.9 94.3 L215.5 95.0 L226.1 95.0" stroke-opacity="0.45" stroke-width="1.00"/><path d="M188.5 107.0 L200.5 108.5 L212.5 109.2 L224.5 111.5 L236.5 110.8 L248.5 111.4 L260.5 114.5" stroke-opacity="0.36" stroke-width="0.49"/><path d="M89.8 104.4 L112.2 105.9 L134.5 107.2 L156.8 107.9 L179.1 109.9 L201.5 111.2 L223.8 114.4" stroke-opacity="0.36" stroke-width="0.87"/><path d="M132.2 99.9 L161.1 101.6 L190.0 103.5 L219.0 105.5 L247.9 107.3 L276.9 108.1 L305.8 110.8" stroke-opacity="0.31" stroke-width="0.42"/><path d="M144.4 88.8 L160.4 90.3 L176.4 90.0 L192.5 92.1 L208.5 93.1 L224.6 94.0 L240.6 93.4" stroke-opacity="0.27" stroke-width="0.54"/><path d="M128.1 94.5 L152.7 95.9 L177.3 96.7 L201.8 98.6 L226.4 100.6 L251.0 100.4 L275.5 103.4" stroke-opacity="0.47" stroke-width="0.87"/><path d="M187.3 119.7 L201.4 119.8 L215.6 122.2 L229.8 123.9 L243.9 123.7 L258.1 125.0 L272.2 127.5" stroke-opacity="0.42" stroke-width="0.50"/><path d="M116.6 91.0 L147.8 91.4 L178.9 94.9 L210.0 97.2 L241.1 98.3 L272.2 99.4 L303.3 101.8" stroke-opacity="0.24" stroke-width="0.41"/><path d="M224.3 132.3 L246.6 133.2 L268.9 136.4 L291.2 138.5 L313.5 139.2 L335.8 141.4 L358.1 143.7" stroke-opacity="0.27" stroke-width="0.75"/><path d="M174.5 99.9 L187.6 99.5 L200.6 100.6 L213.7 101.8 L226.7 103.4 L239.8 103.1 L252.9 105.2" stroke-opacity="0.35" stroke-width="0.72"/><path d="M88.0 101.6 L108.3 102.8 L128.6 106.3 L148.8 106.4 L169.1 108.7 L189.4 110.8 L209.7 112.0" stroke-opacity="0.30" stroke-width="0.71"/><path d="M253.4 116.8 L265.9 117.0 L278.4 118.1 L290.8 120.2 L303.3 120.6 L315.8 121.7 L328.3 123.2" stroke-opacity="0.47" stroke-width="0.67"/><path d="M193.2 114.6 L215.1 115.8 L237.1 117.8 L259.1 119.4 L281.0 122.3 L303.0 123.5 L324.9 125.8" stroke-opacity="0.48" stroke-width="0.56"/><path d="M287.7 118.6 L304.5 119.9 L321.2 122.0 L337.9 122.5 L354.6 124.2 L371.3 125.1 L388.0 127.9" stroke-opacity="0.44" stroke-width="0.94"/><path d="M238.7 98.0 L263.6 101.4 L288.5 103.1 L313.3 102.9 L338.2 106.2 L363.1 106.4 L388.0 108.2" stroke-opacity="0.50" stroke-width="0.90"/><path d="M177.2 94.9 L199.2 96.0 L221.3 97.7 L243.3 100.0 L265.3 99.7 L287.4 102.4 L309.4 103.5" stroke-opacity="0.21" stroke-width="0.60"/><path d="M194.6 115.8 L206.1 116.3 L217.6 117.7 L229.1 116.6 L240.6 117.9 L252.1 118.3 L263.6 121.0" stroke-opacity="0.28" stroke-width="0.48"/><path d="M280.9 112.5 L298.7 113.5 L316.6 116.7 L334.4 117.2 L352.3 118.8 L370.1 118.6 L388.0 119.9" stroke-opacity="0.41" stroke-width="0.66"/><path d="M286.7 99.0 L303.6 98.3 L320.5 101.2 L337.3 100.3 L354.2 103.2 L371.1 103.2 L388.0 103.9" stroke-opacity="0.37" stroke-width="0.96"/><path d="M111.9 94.4 L134.2 95.6 L156.5 97.3 L178.8 98.5 L201.1 100.3 L223.4 102.1 L245.7 103.6" stroke-opacity="0.43" stroke-width="0.57"/><path d="M122.4 103.1 L140.5 105.0 L158.6 105.9 L176.7 109.0 L194.8 109.9 L212.9 110.4 L231.0 112.5" stroke-opacity="0.48" stroke-width="0.46"/><path d="M177.4 121.6 L198.9 122.5 L220.5 124.7 L242.0 127.1 L263.6 129.7 L285.1 130.2 L306.7 133.3" stroke-opacity="0.41" stroke-width="0.78"/><path d="M159.1 102.5 L170.3 103.2 L181.6 105.6 L192.9 105.3 L204.1 105.9 L215.4 106.5 L226.7 109.2" stroke-opacity="0.46" stroke-width="0.80"/><path d="M374 97.5 Q388.5 98.5 390.5 111.5 Q392 125 386.5 141.8 Q384 150.5 372 150.5" stroke="#4a2508" stroke-width="5" stroke-opacity=".3"/></g>
<path d="M99.3 9.1 C97.2 8.6 92.1 10.1 88.8 11.0 C85.5 11.9 82.6 13.0 79.4 14.3 C76.2 15.7 73.1 17.4 69.9 19.1 C66.7 20.8 63.6 22.5 60.4 24.7 C57.2 26.9 54.1 29.8 50.9 32.3 C47.7 34.8 44.5 37.0 41.4 39.9 C38.2 42.8 34.7 45.9 32.0 49.4 C29.3 52.9 27.2 56.7 25.3 60.8 C23.4 64.9 21.9 69.1 20.6 74.0 C19.3 78.9 18.2 85.0 17.3 90.0 C16.4 95.0 15.6 100.3 15.2 104.0 C14.8 107.7 14.5 109.5 14.6 112.0 C14.7 114.5 15.1 117.0 15.8 118.8 C16.5 120.6 17.8 121.3 18.6 123.0 C19.4 124.7 20.3 126.5 20.7 128.7 C21.1 130.9 21.2 133.7 21.0 136.4 C20.8 139.1 20.4 142.4 19.5 145.0 C18.6 147.6 16.6 149.5 15.8 152.0 C15.0 154.5 14.7 156.2 14.6 160.0 C14.5 163.8 11.4 171.7 15.0 175.0 C18.6 178.3 29.1 179.6 36.0 179.8 C42.9 180.1 52.9 179.0 56.3 176.5 C59.7 174.0 56.6 168.2 56.4 165.0 C56.2 161.8 55.6 159.5 55.0 157.5 C54.4 155.5 53.4 154.8 52.6 153.0 C51.9 151.2 50.9 149.1 50.5 147.0 C50.1 144.9 49.9 142.6 50.0 140.4 C50.1 138.2 50.3 136.1 50.9 134.1 C51.5 132.1 52.4 130.3 53.6 128.7 C54.8 127.0 56.0 125.4 58.1 124.2 C60.2 123.0 62.8 122.1 66.2 121.4 C69.6 120.7 75.8 120.9 78.5 120.2 C81.2 119.5 81.4 119.5 82.2 117.5 C83.0 115.5 83.0 112.6 83.2 108.0 C83.4 103.4 83.6 94.5 83.6 90.0 C83.6 85.5 83.8 82.8 83.2 81.0 C82.6 79.2 82.9 79.8 80.0 79.0 C77.1 78.2 69.9 77.4 66.0 76.5 C62.1 75.6 58.8 74.8 56.5 73.5 C54.2 72.2 52.8 70.6 52.0 68.5 C51.2 66.4 51.5 63.6 52.0 61.0 C52.5 58.4 53.4 55.8 55.0 53.0 C56.6 50.2 58.9 47.2 61.5 44.5 C64.1 41.8 67.4 39.3 70.5 37.0 C73.6 34.7 76.9 32.4 80.0 30.5 C83.1 28.6 85.6 27.3 89.0 25.5 C92.4 23.7 98.5 21.4 100.5 19.5 C102.5 17.6 101.4 15.7 101.2 14.0 C101.0 12.3 101.4 9.6 99.3 9.1Z" fill="url(#metal)" stroke="#2e2d2a" stroke-width=".7"/><path d="M99.3 9.1 C97.2 8.6 92.1 10.1 88.8 11.0 C85.5 11.9 82.6 13.0 79.4 14.3 C76.2 15.7 73.1 17.4 69.9 19.1 C66.7 20.8 63.6 22.5 60.4 24.7 C57.2 26.9 54.1 29.8 50.9 32.3 C47.7 34.8 44.5 37.0 41.4 39.9 C38.2 42.8 34.7 45.9 32.0 49.4 C29.3 52.9 27.2 56.7 25.3 60.8 C23.4 64.9 21.9 69.1 20.6 74.0 C19.3 78.9 18.2 85.0 17.3 90.0 C16.4 95.0 15.6 100.3 15.2 104.0 C14.8 107.7 14.5 109.5 14.6 112.0 C14.7 114.5 15.1 117.0 15.8 118.8 C16.5 120.6 17.8 121.3 18.6 123.0 C19.4 124.7 20.3 126.5 20.7 128.7 C21.1 130.9 21.2 133.7 21.0 136.4 C20.8 139.1 20.4 142.4 19.5 145.0 C18.6 147.6 16.6 149.5 15.8 152.0 C15.0 154.5 14.7 156.2 14.6 160.0 C14.5 163.8 11.4 171.7 15.0 175.0 C18.6 178.3 29.1 179.6 36.0 179.8 C42.9 180.1 52.9 179.0 56.3 176.5 C59.7 174.0 56.6 168.2 56.4 165.0 C56.2 161.8 55.6 159.5 55.0 157.5 C54.4 155.5 53.4 154.8 52.6 153.0 C51.9 151.2 50.9 149.1 50.5 147.0 C50.1 144.9 49.9 142.6 50.0 140.4 C50.1 138.2 50.3 136.1 50.9 134.1 C51.5 132.1 52.4 130.3 53.6 128.7 C54.8 127.0 56.0 125.4 58.1 124.2 C60.2 123.0 62.8 122.1 66.2 121.4 C69.6 120.7 75.8 120.9 78.5 120.2 C81.2 119.5 81.4 119.5 82.2 117.5 C83.0 115.5 83.0 112.6 83.2 108.0 C83.4 103.4 83.6 94.5 83.6 90.0 C83.6 85.5 83.8 82.8 83.2 81.0 C82.6 79.2 82.9 79.8 80.0 79.0 C77.1 78.2 69.9 77.4 66.0 76.5 C62.1 75.6 58.8 74.8 56.5 73.5 C54.2 72.2 52.8 70.6 52.0 68.5 C51.2 66.4 51.5 63.6 52.0 61.0 C52.5 58.4 53.4 55.8 55.0 53.0 C56.6 50.2 58.9 47.2 61.5 44.5 C64.1 41.8 67.4 39.3 70.5 37.0 C73.6 34.7 76.9 32.4 80.0 30.5 C83.1 28.6 85.6 27.3 89.0 25.5 C92.4 23.7 98.5 21.4 100.5 19.5 C102.5 17.6 101.4 15.7 101.2 14.0 C101.0 12.3 101.4 9.6 99.3 9.1Z" fill="none" stroke="#262522" stroke-width="4.5" stroke-opacity=".4" clip-path="url(#headclip)"/>
<path d="M101.2 14.0 C101.4 14.5 102.5 17.6 100.5 19.5 C98.5 21.4 92.4 23.7 89.0 25.5 C85.6 27.3 83.1 28.6 80.0 30.5 C76.9 32.4 73.6 34.7 70.5 37.0 C67.4 39.3 64.0 41.9 61.5 44.5 C59.0 47.1 55.8 52.6 55.5 52.5 C55.2 52.4 57.5 46.8 59.5 44.0 C61.5 41.2 64.6 38.5 67.5 36.0 C70.4 33.5 73.8 31.2 77.0 29.2 C80.2 27.2 82.8 25.9 86.5 23.8 C90.2 21.7 97.0 18.1 99.5 16.5 C102.0 14.9 101.0 13.5 101.2 14.0Z" fill="#23211e"/>
<path d="M101.0 15.0 C100.9 15.8 102.5 17.8 100.5 19.5 C98.5 21.2 92.4 23.7 89.0 25.5 C85.6 27.3 83.1 28.6 80.0 30.5 C76.9 32.4 73.6 34.7 70.5 37.0 C67.4 39.3 64.1 41.8 61.5 44.5 C58.9 47.2 56.6 50.2 55.0 53.0 C53.4 55.8 52.5 58.4 52.0 61.0 C51.5 63.6 51.2 66.4 52.0 68.5 C52.8 70.6 54.2 72.2 56.5 73.5 C58.8 74.8 64.4 76.0 66.0 76.5" stroke="#1c1b19" stroke-width="1.2" fill="none"/><path d="M15.5 156 Q36 152 55.5 156.5" stroke="#5e5c58" stroke-width="1" fill="none" opacity=".6"/>

</g>
</defs>
<rect x="95" y="155" width="1044" height="577" fill="#000"/>
<path d="M106 716h1v1h-1zM106 676h1v1h-1zM106 636h1v1h-1zM106 596h1v1h-1zM106 556h1v1h-1zM106 516h1v1h-1zM106 476h1v1h-1zM106 436h1v1h-1zM106 396h1v1h-1zM106 356h1v1h-1zM106 316h1v1h-1zM106 276h1v1h-1zM106 236h1v1h-1zM106 196h1v1h-1zM106 156h1v1h-1zM146 716h1v1h-1zM146 676h1v1h-1zM146 636h1v1h-1zM146 596h1v1h-1zM146 556h1v1h-1zM146 516h1v1h-1zM146 476h1v1h-1zM146 436h1v1h-1zM146 396h1v1h-1zM146 356h1v1h-1zM146 316h1v1h-1zM146 276h1v1h-1zM146 236h1v1h-1zM146 196h1v1h-1zM146 156h1v1h-1zM186 716h1v1h-1zM186 676h1v1h-1zM186 636h1v1h-1zM186 596h1v1h-1zM186 556h1v1h-1zM186 516h1v1h-1zM186 476h1v1h-1zM186 436h1v1h-1zM186 396h1v1h-1zM186 356h1v1h-1zM186 316h1v1h-1zM186 276h1v1h-1zM186 236h1v1h-1zM186 196h1v1h-1zM186 156h1v1h-1zM226 716h1v1h-1zM226 676h1v1h-1zM226 636h1v1h-1zM226 596h1v1h-1zM226 556h1v1h-1zM226 516h1v1h-1zM226 476h1v1h-1zM226 436h1v1h-1zM226 396h1v1h-1zM226 356h1v1h-1zM226 316h1v1h-1zM226 276h1v1h-1zM226 236h1v1h-1zM226 196h1v1h-1zM226 156h1v1h-1zM266 716h1v1h-1zM266 676h1v1h-1zM266 636h1v1h-1zM266 596h1v1h-1zM266 556h1v1h-1zM266 516h1v1h-1zM266 476h1v1h-1zM266 436h1v1h-1zM266 396h1v1h-1zM266 356h1v1h-1zM266 316h1v1h-1zM266 276h1v1h-1zM266 236h1v1h-1zM266 196h1v1h-1zM266 156h1v1h-1zM306 716h1v1h-1zM306 676h1v1h-1zM306 636h1v1h-1zM306 596h1v1h-1zM306 556h1v1h-1zM306 516h1v1h-1zM306 476h1v1h-1zM306 436h1v1h-1zM306 396h1v1h-1zM306 356h1v1h-1zM306 316h1v1h-1zM306 276h1v1h-1zM306 236h1v1h-1zM306 196h1v1h-1zM306 156h1v1h-1zM346 716h1v1h-1zM346 676h1v1h-1zM346 636h1v1h-1zM346 596h1v1h-1zM346 556h1v1h-1zM346 516h1v1h-1zM346 476h1v1h-1zM346 436h1v1h-1zM346 396h1v1h-1zM346 356h1v1h-1zM346 316h1v1h-1zM346 276h1v1h-1zM346 236h1v1h-1zM346 196h1v1h-1zM346 156h1v1h-1zM386 716h1v1h-1zM386 676h1v1h-1zM386 636h1v1h-1zM386 596h1v1h-1zM386 556h1v1h-1zM386 516h1v1h-1zM386 476h1v1h-1zM386 436h1v1h-1zM386 396h1v1h-1zM386 356h1v1h-1zM386 316h1v1h-1zM386 276h1v1h-1zM386 236h1v1h-1zM386 196h1v1h-1zM386 156h1v1h-1zM426 716h1v1h-1zM426 676h1v1h-1zM426 636h1v1h-1zM426 596h1v1h-1zM426 556h1v1h-1zM426 516h1v1h-1zM426 476h1v1h-1zM426 436h1v1h-1zM426 396h1v1h-1zM426 356h1v1h-1zM426 316h1v1h-1zM426 276h1v1h-1zM426 236h1v1h-1zM426 196h1v1h-1zM426 156h1v1h-1zM466 716h1v1h-1zM466 676h1v1h-1zM466 636h1v1h-1zM466 596h1v1h-1zM466 556h1v1h-1zM466 516h1v1h-1zM466 476h1v1h-1zM466 436h1v1h-1zM466 396h1v1h-1zM466 356h1v1h-1zM466 316h1v1h-1zM466 276h1v1h-1zM466 236h1v1h-1zM466 196h1v1h-1zM466 156h1v1h-1zM506 716h1v1h-1zM506 676h1v1h-1zM506 636h1v1h-1zM506 596h1v1h-1zM506 556h1v1h-1zM506 516h1v1h-1zM506 476h1v1h-1zM506 436h1v1h-1zM506 396h1v1h-1zM506 356h1v1h-1zM506 316h1v1h-1zM506 276h1v1h-1zM506 236h1v1h-1zM506 196h1v1h-1zM506 156h1v1h-1zM546 716h1v1h-1zM546 676h1v1h-1zM546 636h1v1h-1zM546 596h1v1h-1zM546 556h1v1h-1zM546 516h1v1h-1zM546 476h1v1h-1zM546 436h1v1h-1zM546 396h1v1h-1zM546 356h1v1h-1zM546 316h1v1h-1zM546 276h1v1h-1zM546 236h1v1h-1zM546 196h1v1h-1zM546 156h1v1h-1zM586 716h1v1h-1zM586 676h1v1h-1zM586 636h1v1h-1zM586 596h1v1h-1zM586 556h1v1h-1zM586 516h1v1h-1zM586 476h1v1h-1zM586 436h1v1h-1zM586 396h1v1h-1zM586 356h1v1h-1zM586 316h1v1h-1zM586 276h1v1h-1zM586 236h1v1h-1zM586 196h1v1h-1zM586 156h1v1h-1zM626 716h1v1h-1zM626 676h1v1h-1zM626 636h1v1h-1zM626 596h1v1h-1zM626 556h1v1h-1zM626 516h1v1h-1zM626 476h1v1h-1zM626 436h1v1h-1zM626 396h1v1h-1zM626 356h1v1h-1zM626 316h1v1h-1zM626 276h1v1h-1zM626 236h1v1h-1zM626 196h1v1h-1zM626 156h1v1h-1zM666 716h1v1h-1zM666 676h1v1h-1zM666 636h1v1h-1zM666 596h1v1h-1zM666 556h1v1h-1zM666 516h1v1h-1zM666 476h1v1h-1zM666 436h1v1h-1zM666 396h1v1h-1zM666 356h1v1h-1zM666 316h1v1h-1zM666 276h1v1h-1zM666 236h1v1h-1zM666 196h1v1h-1zM666 156h1v1h-1zM706 716h1v1h-1zM706 676h1v1h-1zM706 636h1v1h-1zM706 596h1v1h-1zM706 556h1v1h-1zM706 516h1v1h-1zM706 476h1v1h-1zM706 436h1v1h-1zM706 396h1v1h-1zM706 356h1v1h-1zM706 316h1v1h-1zM706 276h1v1h-1zM706 236h1v1h-1zM706 196h1v1h-1zM706 156h1v1h-1zM746 716h1v1h-1zM746 676h1v1h-1zM746 636h1v1h-1zM746 596h1v1h-1zM746 556h1v1h-1zM746 516h1v1h-1zM746 476h1v1h-1zM746 436h1v1h-1zM746 396h1v1h-1zM746 356h1v1h-1zM746 316h1v1h-1zM746 276h1v1h-1zM746 236h1v1h-1zM746 196h1v1h-1zM746 156h1v1h-1zM786 716h1v1h-1zM786 676h1v1h-1zM786 636h1v1h-1zM786 596h1v1h-1zM786 556h1v1h-1zM786 516h1v1h-1zM786 476h1v1h-1zM786 436h1v1h-1zM786 396h1v1h-1zM786 356h1v1h-1zM786 316h1v1h-1zM786 276h1v1h-1zM786 236h1v1h-1zM786 196h1v1h-1zM786 156h1v1h-1zM826 716h1v1h-1zM826 676h1v1h-1zM826 636h1v1h-1zM826 596h1v1h-1zM826 556h1v1h-1zM826 516h1v1h-1zM826 476h1v1h-1zM826 436h1v1h-1zM826 396h1v1h-1zM826 356h1v1h-1zM826 316h1v1h-1zM826 276h1v1h-1zM826 236h1v1h-1zM826 196h1v1h-1zM826 156h1v1h-1zM866 716h1v1h-1zM866 676h1v1h-1zM866 636h1v1h-1zM866 596h1v1h-1zM866 556h1v1h-1zM866 516h1v1h-1zM866 476h1v1h-1zM866 436h1v1h-1zM866 396h1v1h-1zM866 356h1v1h-1zM866 316h1v1h-1zM866 276h1v1h-1zM866 236h1v1h-1zM866 196h1v1h-1zM866 156h1v1h-1zM906 716h1v1h-1zM906 676h1v1h-1zM906 636h1v1h-1zM906 596h1v1h-1zM906 556h1v1h-1zM906 516h1v1h-1zM906 476h1v1h-1zM906 436h1v1h-1zM906 396h1v1h-1zM906 356h1v1h-1zM906 316h1v1h-1zM906 276h1v1h-1zM906 236h1v1h-1zM906 196h1v1h-1zM906 156h1v1h-1zM946 716h1v1h-1zM946 676h1v1h-1zM946 636h1v1h-1zM946 596h1v1h-1zM946 556h1v1h-1zM946 516h1v1h-1zM946 476h1v1h-1zM946 436h1v1h-1zM946 396h1v1h-1zM946 356h1v1h-1zM946 316h1v1h-1zM946 276h1v1h-1zM946 236h1v1h-1zM946 196h1v1h-1zM946 156h1v1h-1zM986 716h1v1h-1zM986 676h1v1h-1zM986 636h1v1h-1zM986 596h1v1h-1zM986 556h1v1h-1zM986 516h1v1h-1zM986 476h1v1h-1zM986 436h1v1h-1zM986 396h1v1h-1zM986 356h1v1h-1zM986 316h1v1h-1zM986 276h1v1h-1zM986 236h1v1h-1zM986 196h1v1h-1zM986 156h1v1h-1zM1026 716h1v1h-1zM1026 676h1v1h-1zM1026 636h1v1h-1zM1026 596h1v1h-1zM1026 556h1v1h-1zM1026 516h1v1h-1zM1026 476h1v1h-1zM1026 436h1v1h-1zM1026 396h1v1h-1zM1026 356h1v1h-1zM1026 316h1v1h-1zM1026 276h1v1h-1zM1026 236h1v1h-1zM1026 196h1v1h-1zM1026 156h1v1h-1zM1066 716h1v1h-1zM1066 676h1v1h-1zM1066 636h1v1h-1zM1066 596h1v1h-1zM1066 556h1v1h-1zM1066 516h1v1h-1zM1066 476h1v1h-1zM1066 436h1v1h-1zM1066 396h1v1h-1zM1066 356h1v1h-1zM1066 316h1v1h-1zM1066 276h1v1h-1zM1066 236h1v1h-1zM1066 196h1v1h-1zM1066 156h1v1h-1zM1106 716h1v1h-1zM1106 676h1v1h-1zM1106 636h1v1h-1zM1106 596h1v1h-1zM1106 556h1v1h-1zM1106 516h1v1h-1zM1106 476h1v1h-1zM1106 436h1v1h-1zM1106 396h1v1h-1zM1106 356h1v1h-1zM1106 316h1v1h-1zM1106 276h1v1h-1zM1106 236h1v1h-1zM1106 196h1v1h-1zM1106 156h1v1h-1z" fill="#5a5a5a"/>
<use href="#hammer" x="187" y="324"/>
<g opacity=".5">
<use href="#hammer" transform="matrix(2.1147 -0.2933 0.2933 2.1147 47 399)"/>
</g>
<g stroke="#ffffff" stroke-opacity=".085" stroke-width="2">
<line x1="95" y1="196.5" x2="1139" y2="196.5"/><line x1="95" y1="596.5" x2="1139" y2="596.5"/>
<line x1="106.5" y1="155" x2="106.5" y2="732"/><line x1="506.5" y1="155" x2="506.5" y2="732"/>
</g>
<path d="M47 399 L892.9 281.7 L949.2 687.6 L103.3 804.9 Z" fill="none" stroke="#ff8080" stroke-opacity=".45" stroke-width="1"/>
<g stroke="#d05050" stroke-opacity=".6" stroke-width="1"><line x1="107" y1="575" x2="107" y2="616"/><line x1="95" y1="596.5" x2="127" y2="596.5"/></g>
<g stroke="#b89a30" stroke-width="1" stroke-dasharray="5 2.3" opacity=".9">
<line x1="95" y1="548" x2="1139" y2="548"/><line x1="906.3" y1="155" x2="906.3" y2="732"/>
</g>
<g fill="#0000c0" stroke="#000060" stroke-width=".6">
<rect x="182" y="319" width="9.5" height="9.5"/><rect x="582" y="319" width="9.5" height="9.5"/><rect x="182" y="511" width="9.5" height="9.5"/><rect x="582" y="511" width="9.5" height="9.5"/>
</g>
<g stroke="#ff2020" stroke-width=".9" fill="none"><circle cx="575.5" cy="448" r="4"/><path d="M571.5 448 H579.5 M575.5 444 V452"/></g>
<g fill="none" stroke="#a4bcd6">
<circle cx="906" cy="548" r="37" stroke-width="6" stroke-opacity=".22"/><circle cx="906" cy="548" r="39" stroke-width="1" stroke-opacity=".55"/><circle cx="906" cy="548" r="37.2" stroke-width="1" stroke-opacity=".45"/><circle cx="906" cy="548" r="35.3" stroke-width="1" stroke-opacity=".4"/><circle cx="906" cy="548" r="33.8" stroke-width=".8" stroke-opacity=".3"/>
</g>
<g stroke="#cfcfcf" stroke-width="2.6"><line x1="891" y1="548" x2="921" y2="548"/><line x1="906" y1="533" x2="906" y2="563"/></g>
<circle cx="906" cy="548" r="1.2" fill="#9a7a30"/>
</svg>

<div class="a" style="left:1139px;top:155px;width:15px;height:577px;background:#f7f7f7"></div>
<div class="a" style="left:95px;top:732px;width:988px;height:16px;background:#f7f7f7"></div>
<div class="a" style="left:226px;top:736px;width:854px;height:8px;border-radius:4px;background:#7f7f7f"></div>
<div class="a" style="left:1143px;top:291px;width:8px;height:330px;border-radius:4px;background:#7f7f7f"></div>
<div class="t" style="left:1103px;top:734px;font-size:12.6px;color:#1a1a1a">10 &lt; 100</div>


<!-- COMMAND -->
<div class="a" style="left:72px;top:748px;width:1082px;height:23px;background:#fff;border-top:1px solid #c8c8c8;border-bottom:1px solid #c8c8c8"></div>
<div class="t" style="left:77px;top:752px;font-size:13.3px;color:#1d1de8"><i>Comando:</i> snapfree</div>
<div class="t" style="left:73px;top:779px;font-size:13.5px;color:#1e1e1e">Secondo obiettivo punto:</div>
<div class="a" style="left:227px;top:776px;width:898px;height:18px;background:#fff"></div>
<div class="a" style="left:1138px;top:749px;width:15px;height:21px;background:#f4f4f4"></div>
<div class="a" style="left:1142px;top:750px;width:8px;height:17px;border-radius:4px;background:#7f7f7f"></div>
<div class="a" style="left:1127px;top:772px;width:26px;height:26px;background:linear-gradient(#f4f4f4,#e4e4e4);border:1px solid #b8b8b8"></div>
<svg class="a" style="left:1127px;top:772px" width="26" height="26"><rect x="5.5" y="8.5" width="15" height="10" fill="#fff" stroke="#222"/><rect x="5.5" y="8.5" width="15" height="2.5" fill="#111"/><rect x="16" y="9.2" width="1.2" height="1.2" fill="#fff"/></svg>


<!-- LAYER PANEL -->
<div class="a" style="left:1154px;top:108px;width:301px;height:690px;background:#fff;border-left:1px solid #cfcfcf;border-right:1px solid #cfcfcf"></div>
<div class="a" style="left:1155px;top:108px;width:299px;height:22px;background:#ececec;border-bottom:1px solid #d6d6d6"></div>
<div class="t" style="left:1280px;top:114px;font-size:11.9px;color:#2a2a2a">Elenco dei livelli</div>
<svg class="a" style="left:1154px;top:106px" width="346" height="692" viewBox="1154 106 346 692">
<defs>
<linearGradient id="pbG" x1="0" y1="0" x2="0" y2="1"><stop offset="0" stop-color="#f6f6f6"/><stop offset="1" stop-color="#e6e6e6"/></linearGradient>
<linearGradient id="rtG" x1="0" y1="0" x2="1" y2="0"><stop offset="0" stop-color="#e4e4e4"/><stop offset=".2" stop-color="#ededed"/><stop offset=".65" stop-color="#dedede"/><stop offset="1" stop-color="#c2c2c2"/></linearGradient>
<g id="eye"><path d="M-7.6 0 Q-6.5 -5.8 0 -5.8 Q6.5 -5.8 7.6 -0.5 Q6.5 5.8 0 5.8 Q-6.5 5.8 -7.6 0Z" fill="#000"/><path d="M-5.3 0.3 Q-3 -3.6 0.5 -3.6 Q4 -3.6 5.3 0 Q3.5 3.8 0 3.8 Q-3.5 3.8 -5.3 0.3Z" fill="#fff"/><circle cx="0" cy="0.2" r="2.9" fill="#000"/><circle cx="-0.6" cy="-1" r=".7" fill="#fff"/></g>
<g id="lock"><path d="M-3.6 -1.5 V-3.5 Q-3.6 -7 0 -7 Q3.6 -7 3.6 -3.5 V-1.5" fill="none" stroke="#b4b4b4" stroke-width="1.6"/><rect x="-5.3" y="-1.5" width="10.6" height="8" fill="#b4b4b4"/></g>
<g id="pen"><path d="M0 14 L1.5 9.5 L11 0.5 L13.5 3 L4 12.2 Z" fill="#e6a640" stroke="#8a5a10" stroke-width=".6"/><path d="M11 0.5 L12.3 -0.5 L14.6 1.8 L13.5 3 Z" fill="#e02020"/><path d="M0 14 L1.5 9.5 L4 12.2Z" fill="#f0d8a8"/><path d="M0 14 L.6 12.3 L1.7 13.4Z" fill="#222"/></g>
<g id="winic"><rect x="0.5" y="0.5" width="27" height="27" fill="#fff" stroke="#222"/><rect x="0.5" y="0.5" width="27" height="4.5" fill="#000"/><rect x="1.8" y="1.2" width="3" height="3" fill="#fff"/></g>
</defs>
<circle cx="1164" cy="118.4" r="6.6" fill="#6e6e6e"/><path d="M1161 115.4 L1167 121.4 M1167 115.4 L1161 121.4" stroke="#fff" stroke-width="1.8"/>
<circle cx="1182" cy="118.4" r="6.6" fill="#6e6e6e"/><rect x="1178.3" y="117.3" width="5" height="4" fill="none" stroke="#fff" stroke-width="1.1"/><path d="M1180.5 117.3 V115 H1186 V119.2 H1183.3" fill="none" stroke="#fff" stroke-width="1.1"/>
<g fill="url(#pbG)" stroke="#a9a9a9" stroke-width="1.6">
<rect x="1155.8" y="130.8" width="58.7" height="24.4"/><rect x="1214.5" y="130.8" width="59.9" height="24.4"/><rect x="1274.4" y="130.8" width="60.1" height="24.4"/><rect x="1334.5" y="130.8" width="60.4" height="24.4"/><rect x="1394.9" y="130.8" width="59.3" height="24.4"/>
</g>
<use href="#eye" x="1185.1" y="142.8"/>
<g opacity=".35"><use href="#eye" x="1245" y="142.8"/></g>
<path d="M1305 136.5 V149 M1298.8 142.8 H1311.2" stroke="#e00000" stroke-width="3.2"/>
<rect x="1359" y="141" width="12" height="3.6" fill="#e00000"/>
<use href="#pen" x="1418" y="135.8"/>
<rect x="1155.5" y="177.3" width="298.5" height="19.3" fill="#0b4ad8"/>
<rect x="1161.5" y="163.8" width="15" height="7.5" fill="#fff" stroke="#000" stroke-width="1"/>
<rect x="1161" y="183.3" width="16" height="8.2" fill="#343c4a"/>
<text x="1183" y="171.8" font-family="Liberation Sans" font-size="12.6" fill="#111">0</text>
<text x="1183" y="191.4" font-family="Liberation Sans" font-size="12.8" fill="#fff">Immagine</text>
<use href="#eye" x="1422.8" y="166.6"/><use href="#eye" x="1422.8" y="186.8"/>
<use href="#lock" x="1444.6" y="166.8"/><use href="#lock" x="1444.6" y="187"/>
<use href="#pen" x="1394.5" y="179.5"/>
<!-- right toolbar -->
<rect x="1455" y="108" width="45" height="690" fill="url(#rtG)"/>
<g fill="#9a9a9a"><circle cx="1463" cy="117" r=".8"/><circle cx="1469" cy="117" r=".8"/><circle cx="1475" cy="117" r=".8"/><circle cx="1481" cy="117" r=".8"/><circle cx="1487" cy="117" r=".8"/></g>
<rect x="1456" y="120.5" width="42.5" height="42" rx="5" fill="#b6b6b6"/>
<rect x="1456" y="417" width="42.5" height="43" rx="5" fill="#b6b6b6"/>
<g stroke="#8a8a8a" stroke-width=".9" stroke-dasharray="1 2.5"><line x1="1459" y1="261.5" x2="1500" y2="261.5"/><line x1="1459" y1="409" x2="1500" y2="409"/><line x1="1459" y1="512.5" x2="1500" y2="512.5"/></g>
<use href="#winic" x="1463" y="127"/><use href="#winic" x="1463" y="174"/><use href="#winic" x="1463" y="220"/><use href="#winic" x="1463" y="276"/><use href="#winic" x="1463" y="322"/><use href="#winic" x="1463" y="368"/><use href="#winic" x="1463" y="424"/><use href="#winic" x="1463" y="471"/>
<path d="M1470 151 L1470 140 L1476 136 L1476 148 Z" fill="#aaa" stroke="#555" stroke-width=".6"/><path d="M1473 150 V139 L1484 134.5 V145.5 Z" fill="#fff" stroke="#555" stroke-width=".7"/><path d="M1476 145 L1480 139 L1481 144 Z" fill="none" stroke="#e03030" stroke-width=".8"/>
<rect x="1469" y="186" width="11" height="8" fill="#f4eccc" stroke="#777" stroke-width=".6"/><circle cx="1480" cy="194" r="4.5" fill="#f4eccc" stroke="#777" stroke-width=".6"/>
<rect x="1469" y="229" width="16" height="11" rx="2" fill="#f0f0f0" stroke="#9cb4d8" stroke-width=".8"/>
<g fill="#111"><rect x="1467.5" y="283" width="3" height="2.5"/><rect x="1467.5" y="288.5" width="3" height="2.5"/><rect x="1467.5" y="294" width="3" height="2.5"/></g>
<g fill="none" stroke="#444" stroke-width=".6"><rect x="1472.5" y="283" width="13" height="2.5"/><rect x="1472.5" y="288.5" width="13" height="2.5"/><rect x="1472.5" y="294" width="13" height="2.5"/></g>
<path d="M1469.5 333 H1484.5 L1478.5 340 V346 L1476 345 V340 Z" fill="#999" stroke="#555" stroke-width=".6"/>
<path d="M1469 375 L1474 378 V390 L1469 393 Z M1474 380 H1483 V388 H1474" fill="#ddd" stroke="#555" stroke-width=".6"/><line x1="1467" y1="384" x2="1487" y2="384" stroke="#e06060" stroke-width=".7" stroke-dasharray="1.5 1"/>
<g stroke="#777" stroke-width=".5"><line x1="1467" y1="434" x2="1479" y2="434"/><line x1="1467" y1="437" x2="1480" y2="437"/><line x1="1467" y1="440" x2="1481" y2="440"/><line x1="1467" y1="443" x2="1482" y2="443"/><line x1="1463.5" y1="447" x2="1490.5" y2="447"/></g>
<rect x="1471" y="480" width="12" height="14" rx="1" fill="#c8883a" stroke="#8a5a20" stroke-width=".5"/><rect x="1472.5" y="482" width="9" height="11" fill="#f2f2f2"/><rect x="1474" y="478.5" width="6" height="3" fill="#888"/>
<g fill="none" stroke="#1a1a1a" stroke-width="1.6"><path d="M1465 532.8 H1474.5 Q1476 532.8 1476 534.3 V539 Q1476 540.5 1474.5 540.5 H1468.5 M1474.5 540.5 Q1476 540.5 1476 542 V546.5 Q1476 548.2 1474.5 548.2 H1465"/><path d="M1479.5 532.8 H1486 Q1490 532.8 1490 537 V544 Q1490 548.2 1486 548.2 H1479.5 Z"/></g>
</svg>


<!-- RIGHT TOOLBAR -->


<!-- STATUS -->
<div id="status" class="a">
<span class="t" style="left:2px;top:9px">199.75,12</span>
<span class="t" style="left:2px;top:29px">@82.6504,-24.9718</span>
<div class="a" style="left:253px;top:4px;width:1px;height:40px;background:#9a9a9a"></div>
<span class="t" style="left:256px;top:9px">200.1101&lt;3°</span>
<span class="t" style="left:256px;top:29px">@86.3405&lt;343°</span>
<div class="a" style="left:507px;top:21px;width:5px;height:5px;border-radius:50%;background:#c4c4c4"></div>
<span class="t" style="left:587px;top:19px;font-size:9.8px">Secondo obiettivo punto</span>
<svg class="a" style="left:715px;top:7px" width="22" height="32"><path d="M2.5 11 Q2.5 1 11 1 Q19.5 1 19.5 11 V20 Q19.5 30.5 11 30.5 Q2.5 30.5 2.5 20 Z" fill="#fff" stroke="#333" stroke-width="1"/><path d="M2.5 13.5 H19.5 M11 1 V13.5" stroke="#333" stroke-width="1" fill="none"/><rect x="9.3" y="3.5" width="3.4" height="7" rx="1.7" fill="#fff" stroke="#333" stroke-width=".9"/></svg>
<span class="t" style="left:754px;top:19px;font-size:9.8px">Indietro</span>
<div class="a" style="left:940px;top:21px;width:5px;height:5px;border-radius:50%;background:#c4c4c4"></div>
<span class="t" style="left:949px;top:13px;font-size:9.8px">Entità selezionate:</span>
<span class="t" style="left:949px;top:25px;font-size:9.8px">1 Immagine su livello "Immagine"</span>
<div class="a" style="left:1269px;top:21px;width:5px;height:5px;border-radius:50%;background:#c4c4c4"></div>

</div>

</body></html>
